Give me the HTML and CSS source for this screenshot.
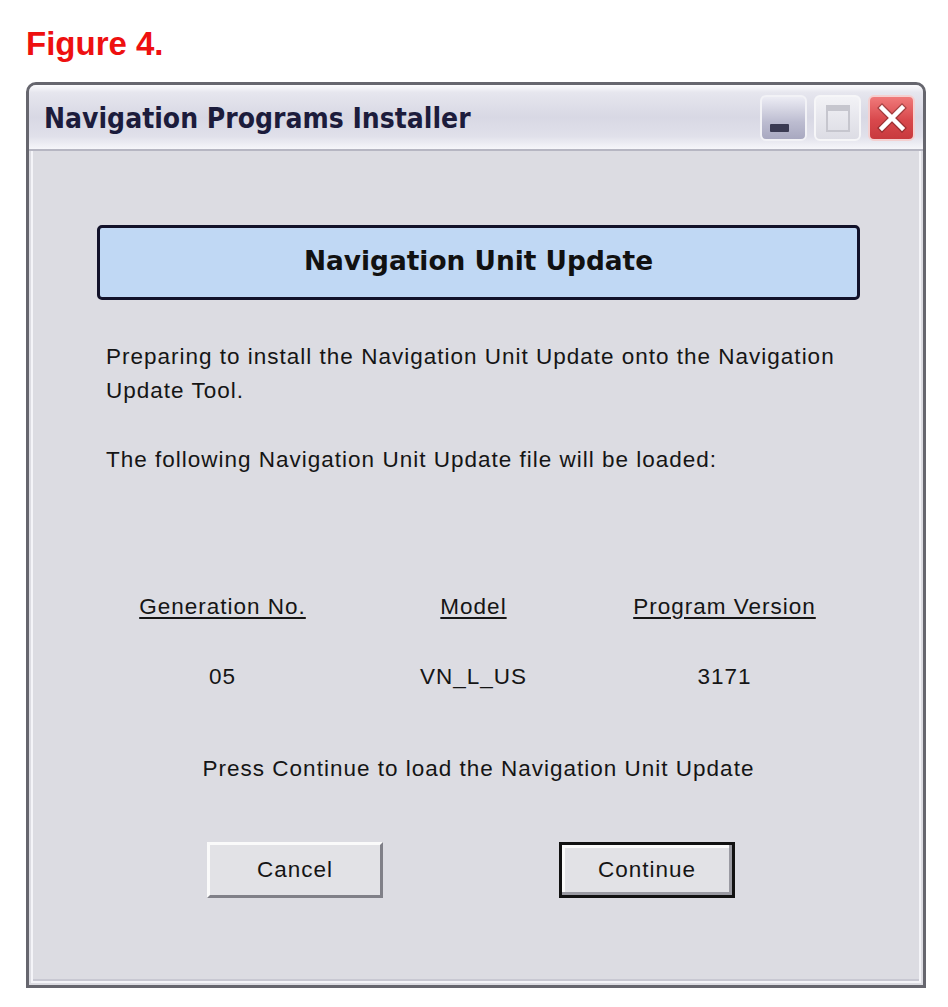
FILE: index.html
```html
<!DOCTYPE html>
<html>
<head>
<meta charset="utf-8">
<link rel="stylesheet" href="styles.css">
</head>
<body>
<h1 class="figure">Figure 4.</h1>
<div class="window">
  <div class="titlebar">
    <span class="title">Navigation Programs Installer</span>
    <div class="controls">
      <div class="cbtn min"><span class="min-bar"></span></div>
      <div class="cbtn max"><span class="max-box"></span></div>
      <div class="cbtn close">
        <svg width="30" height="30" viewBox="0 0 30 30"><path d="M5 5 L25 25 M25 5 L5 25" stroke="#5a1a1a" stroke-width="7" stroke-linecap="square" opacity="0.45"/><path d="M5 5 L25 25 M25 5 L5 25" stroke="#fff" stroke-width="4.5" stroke-linecap="square"/></svg>
      </div>
    </div>
  </div>
  <div class="client">
    <div class="content">
      <div class="banner">Navigation Unit Update</div>
      <p class="text first">Preparing to install the Navigation Unit Update onto the Navigation Update Tool.</p>
      <p class="text">The following Navigation Unit Update file will be loaded:</p>
      <div class="grid">
        <div class="hdr">Generation No.</div>
        <div class="hdr">Model</div>
        <div class="hdr">Program Version</div>
        <div class="val">05</div>
        <div class="val">VN_L_US</div>
        <div class="val">3171</div>
      </div>
      <p class="prompt">Press Continue to load the Navigation Unit Update</p>
      <div class="buttons">
        <div class="btn">Cancel</div>
        <div class="btn default">Continue</div>
      </div>
    </div>
  </div>
</div>
</body>
</html>
```
FILE: styles.css
```css
html, body {
  margin: 0;
  padding: 0;
  background: #ffffff;
}
body {
  width: 948px;
  height: 1007px;
  overflow: hidden;
  font-family: "Liberation Sans", Arial, sans-serif;
}
.figure {
  margin: 0;
  padding: 25px 0 0 26px;
  height: 82px;
  box-sizing: border-box;
  font-family: "Liberation Sans", Arial, sans-serif;
  font-weight: bold;
  font-size: 33px;
  line-height: 38px;
  color: #ee1010;
}
.window {
  margin-left: 26px;
  width: 900px;
  height: 906px;
  box-sizing: border-box;
  border: 3px solid #66666e;
  border-radius: 10px 10px 0 0;
  background: #dcdce2;
  display: flex;
  flex-direction: column;
}
.titlebar {
  height: 64px;
  flex: none;
  display: flex;
  align-items: center;
  justify-content: space-between;
  padding: 0 8px 0 15px;
  border-radius: 7px 7px 0 0;
  background: linear-gradient(#fbfbfd 0%, #e6e6ee 12%, #d8d8e4 50%, #e0e0ea 80%, #f6f6fa 100%);
  border-bottom: 2px solid #b6b6c2;
}
.title {
  font-family: "DejaVu Sans Condensed", "DejaVu Sans", sans-serif;
  font-weight: bold;
  font-size: 28px;
  color: #1c1c3c;
  margin-top: 2px;
}
.controls {
  display: flex;
  gap: 7px;
  align-items: center;
  margin-top: 2px;
}
.cbtn {
  width: 47px;
  height: 46px;
  box-sizing: border-box;
  border-radius: 6px;
  display: flex;
  align-items: center;
  justify-content: center;
  position: relative;
}
.min {
  border: 2px solid #f2f2f6;
  background: linear-gradient(#ececf4, #bcbcd0 60%, #a8a8c0);
}
.min-bar {
  position: absolute;
  left: 8px;
  bottom: 7px;
  width: 19px;
  height: 8px;
  background: #3a3a52;
  border-radius: 1px;
}
.max {
  border: 2px solid #f6f6f8;
  background: linear-gradient(#f2f2f6, #dcdce4);
}
.max-box {
  width: 24px;
  height: 27px;
  box-sizing: border-box;
  border: 2px solid #c6c6ce;
  border-top-width: 6px;
}
.close {
  border: 2px solid #f4d0d0;
  background: linear-gradient(#f07a7a, #d8484c 55%, #c83a3e);
}
.client {
  flex: 1;
  margin: 0 2px 2px 2px;
  border: 2px solid #f4f4f8;
  border-top: none;
  box-shadow: inset 0 -2px 0 #c8c8d2;
  background: #dcdce2;
  padding: 74px 0 0 64px;
}
.content {
  width: 763px;
}
.banner {
  height: 75px;
  box-sizing: border-box;
  border: 3px solid #12122a;
  border-radius: 5px;
  background: #c0d8f4;
  display: flex;
  align-items: center;
  justify-content: center;
  font-family: "DejaVu Sans", sans-serif;
  font-weight: bold;
  font-size: 26.4px;
  color: #111;
  padding-bottom: 4px;
}
.text {
  margin: 0;
  padding-left: 9px;
  font-size: 22.5px;
  letter-spacing: 1px;
  line-height: 34px;
  color: #151515;
}
.text.first {
  margin-top: 40px;
  margin-bottom: 35px;
}
.grid {
  display: grid;
  grid-template-columns: repeat(3, 1fr);
  padding-right: 10px;
  margin-top: 113px;
  row-gap: 36px;
  text-align: center;
  font-size: 22.5px;
  letter-spacing: 1px;
  color: #151515;
  line-height: 34px;
}
.hdr {
  text-decoration: underline;
  text-underline-offset: 3px;
}
.prompt {
  margin: 58px 0 0 0;
  text-align: center;
  font-size: 22.5px;
  letter-spacing: 1px;
  line-height: 34px;
  color: #151515;
}
.buttons {
  display: flex;
  gap: 176px;
  margin: 56px 0 0 110px;
}
.btn {
  width: 176px;
  height: 56px;
  box-sizing: border-box;
  display: flex;
  align-items: center;
  justify-content: center;
  font-size: 22.5px;
  letter-spacing: 1px;
  color: #151515;
  background: #e2e2e6;
  border-top: 3px solid #fafafa;
  border-left: 3px solid #fafafa;
  border-right: 3px solid #808088;
  border-bottom: 3px solid #808088;
}
.btn.default {
  border: 3px solid #111;
  box-shadow: inset -3px -3px 0 #9a9aa2, inset 3px 3px 0 #fafafa;
}
```
